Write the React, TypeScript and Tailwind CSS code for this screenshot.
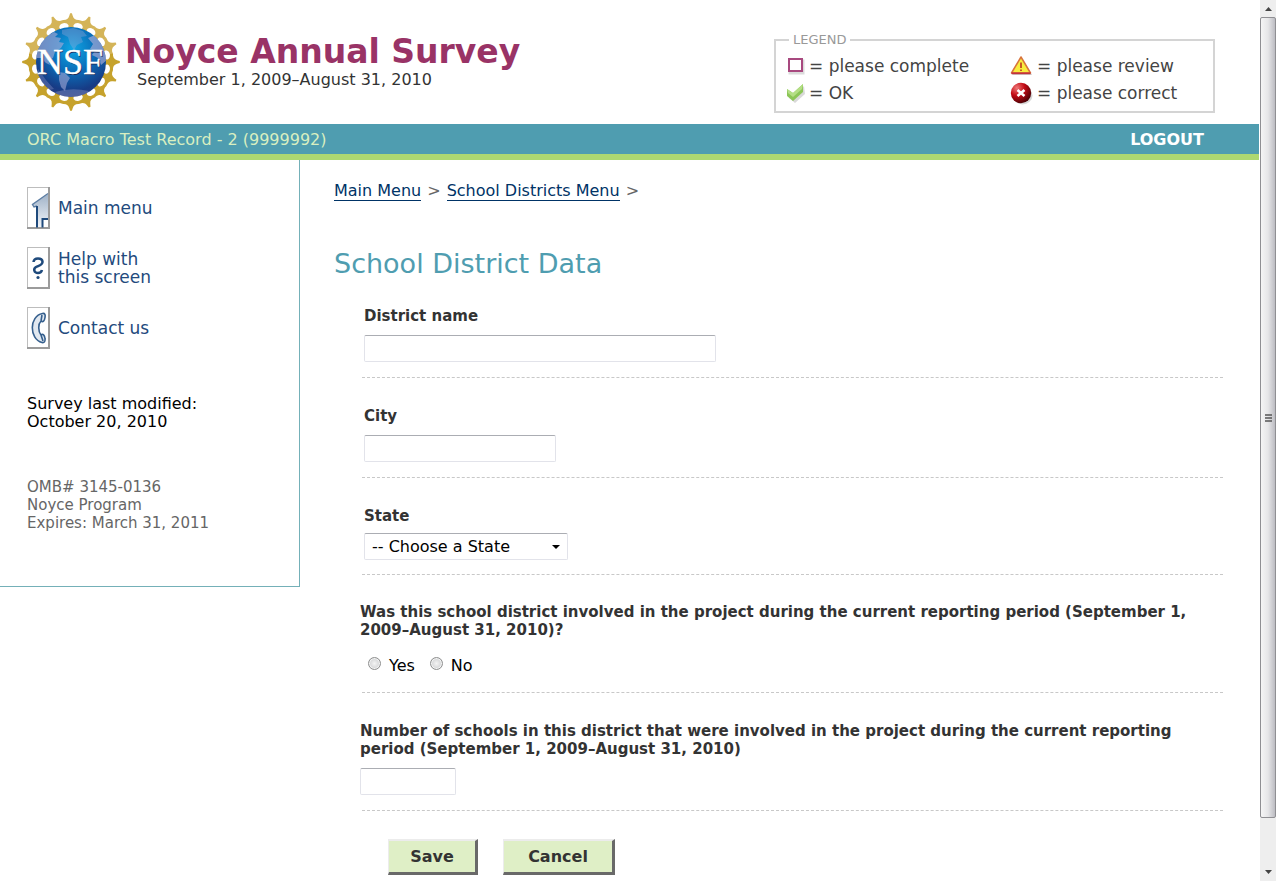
import type { ReactNode } from 'react';

const RAYS = Array.from({ length: 16 }, (_, i) => i * 22.5);

function NsfLogo() {
  return (
    <svg width="100" height="100" viewBox="-50 -50 100 100" role="img" aria-label="NSF">
      <defs>
        <radialGradient id="globe" cx="0.52" cy="0.3" r="0.72">
          <stop offset="0" stopColor="#0fa5e3" />
          <stop offset="0.45" stopColor="#0a6fba" />
          <stop offset="0.85" stopColor="#173b85" />
          <stop offset="1" stopColor="#2b3d80" />
        </radialGradient>
        <clipPath id="disc">
          <circle r="35" />
        </clipPath>
      </defs>
      {RAYS.map((a) => (
        <path
          key={a}
          transform={`rotate(${a})`}
          d="M-0.9 -48.8 H0.9 L1.8 -46 C2.6 -43 5 -41.6 8.4 -42 L7 -34 H-7 L-8.4 -42 C-5 -41.6 -2.6 -43 -1.8 -46Z"
          fill={a > 80 && a < 280 ? '#c6a22c' : '#d4b458'}
        />
      ))}
      {RAYS.map((a) => (
        <path key={a} transform={`rotate(${a + 11.25})`} d="M-4.8 -36.5 Q-3.6 -39.6 0 -39.6 Q3.6 -39.6 4.8 -36.5 L4 -34 H-4Z" fill="#fff" />
      ))}
      <circle r="35" fill="url(#globe)" />
      <g clipPath="url(#disc)" fill="#a3a9d6">
        <path
          d="M-32 -17 L-24 -26 L-17 -30 L-13 -28 L-16 -25 L-10 -24 L-12 -20 L-7 -19 L-10 -14 L-16 -10 L-18 -4 L-23 -2 L-21 3 L-25 1 L-30 -4 L-36 -4Z"
          opacity="0.65"
        />
        <path d="M-9 -32 L2 -34 L12 -31 L16 -26 L10 -25 L12 -20 L6 -17 L3 -12 L-1 -18 L-3 -25 L-9 -28Z" opacity="0.35" />
        <path d="M17 -24 L24 -27 L34 -15 L36 -2 L30 3 L27 -4 L21 -7 L24 -11 L19 -13 L22 -18Z" opacity="0.7" />
        <path d="M-12 10 L-6 11 L-1 16 L-4 21 L-6 29 L-10 25 L-12 18Z" opacity="0.6" />
        <path d="M-33 7 L-25 18 L-17 27 L-22 28 L-33 17Z" opacity="0.3" />
        <path d="M-16 30 Q0 25 18 29 L12 36 L-10 36Z" opacity="0.35" />
      </g>
      <text
        x="0"
        y="13"
        textAnchor="middle"
        fontSize="36"
        fill="#1a2c5a"
        className="font-['Liberation_Serif',serif]"
        aria-hidden="true"
      >
        NSF
      </text>
      <text
        x="-1"
        y="12"
        textAnchor="middle"
        fontSize="36"
        fill="#ffffff"
        stroke="#ffffff"
        strokeWidth="0.4"
        className="font-['Liberation_Serif',serif]"
      >
        NSF
      </text>
    </svg>
  );
}

function BoxIcon() {
  return (
    <svg width="22" height="24" viewBox="0 0 22 24">
      <rect x="5" y="7" width="13" height="12" fill="none" stroke="#000" strokeOpacity="0.14" strokeWidth="3" />
      <rect x="4" y="5" width="13" height="12" fill="#fff" stroke="#a8497f" strokeWidth="2" />
    </svg>
  );
}

function CheckIcon() {
  return (
    <svg width="22" height="24" viewBox="0 0 22 24">
      <path d="M3 11 L9 16 L19 5 L20 13 L10 22 L4 17Z" fill="#000" opacity="0.15" />
      <path d="M2 8 L8 12 L18 3 V11 L8 20 L2 15Z" fill="#8cc657" />
      <path d="M2 8 L8 12 L18 3 L17 8 L8 16 L3 12Z" fill="#b4df85" />
    </svg>
  );
}

function WarningIcon() {
  return (
    <svg width="24" height="24" viewBox="0 0 24 24">
      <path d="M3 21 L23 21 L13 5Z" fill="#000" opacity="0.2" />
      <path d="M12 3 L21.5 19 H2.5Z" fill="#f8ed3e" stroke="#d8743c" strokeWidth="1.5" strokeLinejoin="round" />
      <path d="M2.5 19.3 H21.5" stroke="#c4333b" strokeWidth="1.8" />
      <path d="M12 8.5 V14 M12 15.4 V17" stroke="#c34b23" strokeWidth="1.8" />
    </svg>
  );
}

function ErrorIcon() {
  return (
    <svg width="24" height="24" viewBox="0 0 24 24">
      <defs>
        <radialGradient id="red" cx="0.3" cy="0.25" r="0.85">
          <stop offset="0" stopColor="#ee7777" />
          <stop offset="0.45" stopColor="#c20a14" />
          <stop offset="1" stopColor="#3c0004" />
        </radialGradient>
      </defs>
      <ellipse cx="13.5" cy="14.5" rx="10" ry="9" fill="#000" opacity="0.16" />
      <circle cx="12" cy="12" r="10.2" fill="url(#red)" />
      <path d="M8.5 9 L15.5 15 M15.5 9 L8.5 15" stroke="#fff" strokeWidth="2.6" />
    </svg>
  );
}

function NavIcon({ children }: { children: ReactNode }) {
  return (
    <svg width="23" height="42" viewBox="0 0 23 42" className="shrink-0">
      <rect x="0.5" y="0.5" width="22" height="41" fill="#fff" stroke="#bdbdbd" />
      <path d="M22 0 V41 H0" fill="none" stroke="#9b9b9b" strokeWidth="2" />
      {children}
    </svg>
  );
}

function HouseIcon() {
  return (
    <NavIcon>
      <defs>
        <linearGradient id="wall" x1="0" y1="0" x2="0" y2="1">
          <stop offset="0" stopColor="#9fb2c8" />
          <stop offset="1" stopColor="#f2f5f9" />
        </linearGradient>
      </defs>
      <path d="M5 18 L21 7 V31 H15 V40 H10 V20Z" fill="url(#wall)" />
      <path d="M21 6.5 L5.5 17.5 L7 20 L10 19" fill="none" stroke="#5c7da3" strokeWidth="1.4" />
      <path d="M10 19 V40.5 M15.5 40.5 V32 H21" fill="none" stroke="#1f4a7c" strokeWidth="2" />
    </NavIcon>
  );
}

function QuestionIcon() {
  return (
    <NavIcon>
      <path
        d="M6.5 15 C7 10 15 10.5 15.5 14.5 C16 18 12 18.5 9 20 C6 22 7 26 11 26 C13 26 14.5 25 15 23"
        fill="none"
        stroke="#1f4a7c"
        strokeWidth="2.5"
      />
      <circle cx="11" cy="30.5" r="1.6" fill="#1f4a7c" />
    </NavIcon>
  );
}

function PhoneIcon() {
  return (
    <NavIcon>
      <path
        d="M15.5 6.5 C18 6 18.5 8 18 10.5 C17.5 14 16 15.5 14 14 C11 17 11 24 14 28 C16 26.5 17.5 28 18 31.5 C18.5 34 17.5 36 15 35.5 C2 32 2 9 15.5 6.5Z M14 14 L15 8 M14 28 L16 34"
        fill="#e1e8f0"
        stroke="#355f8d"
        strokeWidth="1.6"
      />
    </NavIcon>
  );
}

const navItems = [
  { icon: <HouseIcon />, label: ['Main menu'] },
  { icon: <QuestionIcon />, label: ['Help with', 'this screen'] },
  { icon: <PhoneIcon />, label: ['Contact us'] },
];

const inputClass =
  'block h-[27px] rounded-[2px] border border-[#e2e3ea] border-t-[#abadb3] bg-white px-[7px] text-black';

const labelClass = 'block text-[15px] font-bold';

const buttonClass =
  'h-9 border-t-2 border-l border-r-[3px] border-b-[3px] border-t-[#ececec] border-l-[#ececec] border-r-[#696969] border-b-[#696969] bg-[#dfefc6] font-bold text-[#333]';

function Divider() {
  return <hr className="ml-0.5 border-t border-dashed border-[#c8c8c8]" />;
}

function Header() {
  return (
    <header className="flex h-[124px] items-start justify-between pr-[45px] pl-[21px]">
      <div className="flex">
        <div className="pt-3">
          <NsfLogo />
        </div>
        <div className="pt-8 pl-1">
          <h1 className="text-[33px] leading-[39px] font-bold text-[#993366]">Noyce Annual Survey</h1>
          <p className="pl-3 text-[#333]">September 1, 2009–August 31, 2010</p>
        </div>
      </div>
      <fieldset className="mt-[31px] w-[441px] border-2 border-[#d4d4d4] px-[9px] pb-1.5 text-[17px] text-[#444]">
        <legend className="ml-1 px-1 text-[13px] text-[#999]">LEGEND</legend>
        <ul className="grid grid-cols-[224px_1fr] gap-y-[3px] pt-[5px]">
          <li className="flex items-center gap-0.5">
            <BoxIcon /> = please complete
          </li>
          <li className="flex items-center gap-1">
            <WarningIcon /> = please review
          </li>
          <li className="flex items-center gap-0.5">
            <CheckIcon /> = OK
          </li>
          <li className="flex items-center gap-1">
            <ErrorIcon /> = please correct
          </li>
        </ul>
      </fieldset>
    </header>
  );
}

function Sidebar() {
  return (
    <aside className="w-[300px] shrink-0 border-r border-b border-[#74b0b8] pt-[27px] pb-[54px] pl-[27px]">
      <nav className="flex flex-col gap-[18px]">
        {navItems.map((item) => (
          <a key={item.label[0]} href="#" className="flex items-center gap-2 text-[17px] text-[#234a7d]">
            {item.icon}
            <span>
              {item.label.map((line) => (
                <span key={line} className="block">
                  {line}
                </span>
              ))}
            </span>
          </a>
        ))}
      </nav>
      <p className="mt-[46px] text-black">
        Survey last modified:
        <br />
        October 20, 2010
      </p>
      <p className="mt-[47px] text-[15px] text-[#666]">
        OMB# 3145-0136
        <br />
        Noyce Program
        <br />
        Expires: March 31, 2011
      </p>
    </aside>
  );
}

function DistrictForm() {
  return (
    <form className="pl-[26px] text-[#333]" onSubmit={(e) => e.preventDefault()}>
      <div className="pb-[15px] pl-1">
        <label htmlFor="district" className={`${labelClass} mb-2.5`}>
          District name
        </label>
        <input id="district" type="text" className={`${inputClass} w-[352px]`} />
      </div>
      <Divider />
      <div className="pt-[29px] pb-[15px] pl-1">
        <label htmlFor="city" className={`${labelClass} mb-2.5`}>
          City
        </label>
        <input id="city" type="text" className={`${inputClass} w-48`} />
      </div>
      <Divider />
      <div className="pt-[29px] pb-3.5 pl-1">
        <label htmlFor="state" className={`${labelClass} mb-2`}>
          State
        </label>
        <div className="relative w-[204px]">
          <select id="state" className={`${inputClass} w-full appearance-none`}>
            <option>-- Choose a State</option>
          </select>
          <svg width="8" height="4" viewBox="0 0 8 4" className="pointer-events-none absolute top-3 right-2">
            <path d="M0 0 H8 L4 4Z" fill="#000" />
          </svg>
        </div>
      </div>
      <Divider />
      <fieldset className="pt-7 pb-[17px]">
        <legend className="contents text-[15px] font-bold">
          Was this school district involved in the project during the current reporting period (September 1,
          2009–August 31, 2010)?
        </legend>
        <div className="mt-[18px] flex gap-[15px] pl-2 text-black">
          {['Yes', 'No'].map((answer) => (
            <label key={answer} className="flex gap-2">
              <input
                type="radio"
                name="involved"
                className="size-[13px] appearance-none rounded-full border border-[#8e8f8f] bg-radial from-[#f4f4f4] to-[#c4c6c8] shadow-[inset_0_0_0_1px_#f4f4f4] checked:from-[#234a7d]"
              />
              {answer}
            </label>
          ))}
        </div>
      </fieldset>
      <Divider />
      <div className="pt-[29px] pb-[15px]">
        <label htmlFor="schools" className={`${labelClass} mb-2.5`}>
          Number of schools in this district that were involved in the project during the current reporting period
          (September 1, 2009–August 31, 2010)
        </label>
        <input id="schools" type="text" className={`${inputClass} w-24`} />
      </div>
      <Divider />
      <div className="flex gap-[25px] pt-7 pl-7">
        <button type="submit" className={`${buttonClass} w-[90px]`}>
          Save
        </button>
        <button type="button" className={`${buttonClass} w-28`}>
          Cancel
        </button>
      </div>
    </form>
  );
}

function ScrollTrack() {
  return (
    <div className="flex w-4 shrink-0 flex-col items-center bg-[#eeeeee]" aria-hidden="true">
      <div className="flex h-[17px] items-center">
        <svg width="7" height="4" viewBox="0 0 7 4">
          <path d="M0 4 H7 L3.5 0Z" fill="#444" />
        </svg>
      </div>
      <div className="flex w-full flex-1 items-center justify-center rounded-[2px] border border-[#8f8f93] bg-linear-to-r from-[#f5f5f5] via-[#e6e6e8] to-[#bcbcc2]">
        <svg width="7" height="8" viewBox="0 0 7 8">
          <path d="M0 1 H7 M0 4 H7 M0 7 H7" stroke="#555" strokeWidth="1.5" />
        </svg>
      </div>
      <div className="flex h-[63px] items-end pb-[7px]">
        <svg width="7" height="4" viewBox="0 0 7 4">
          <path d="M0 0 H7 L3.5 4Z" fill="#444" />
        </svg>
      </div>
    </div>
  );
}

export default function App() {
  return (
    <div className="flex min-h-screen bg-white font-['DejaVu_Sans',Verdana,sans-serif] text-base leading-[18px]">
      <div className="min-w-0 flex-1">
        <Header />
        <div className="mr-px flex h-9 items-center justify-between border-b-[6px] border-[#add871] bg-[#4f9db0] pt-0.5 pr-[55px] pl-[27px]">
          <span className="text-[#d9efc0]">ORC Macro Test Record - 2 (9999992)</span>
          <a href="#" className="font-bold text-white">
            LOGOUT
          </a>
        </div>
        <div className="flex items-start">
          <Sidebar />
          <main className="min-w-0 flex-1 pt-[22px] pr-[37px] pl-[34px]">
            <nav className="flex gap-1.5 text-[#666]">
              <a href="#" className="border-b border-[#003366] text-[#003366]">
                Main Menu
              </a>
              &gt;
              <a href="#" className="border-b border-[#003366] text-[#003366]">
                School Districts Menu
              </a>
              &gt;
            </nav>
            <h2 className="mt-[47px] mb-[27px] text-[27px] leading-8 text-[#4f9db0]">School District Data</h2>
            <DistrictForm />
          </main>
        </div>
      </div>
      <ScrollTrack />
    </div>
  );
}
